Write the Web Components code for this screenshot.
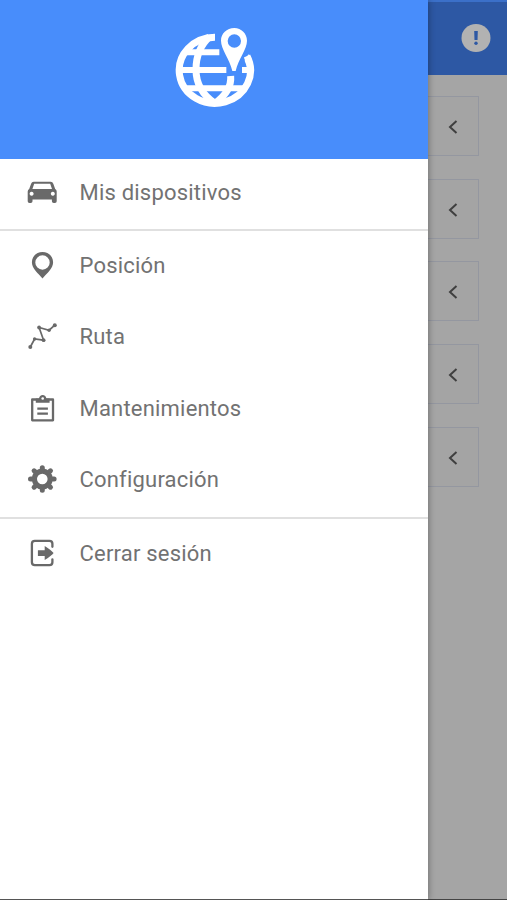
<!DOCTYPE html>
<html lang="es">
<head>
<meta charset="utf-8">
<title>Menú</title>
<style>
html,body{margin:0;height:100%;overflow:hidden}
body{font-family:Roboto,"Liberation Sans",sans-serif;background:#a5a5a5}
</style>
</head>
<body>
<app-shell>
  <side-drawer slot="drawer">
    <brand-header></brand-header>
    <menu-item icon="car">Mis dispositivos</menu-item>
    <menu-divider></menu-divider>
    <menu-item icon="pin">Posición</menu-item>
    <menu-item icon="route">Ruta</menu-item>
    <menu-item icon="clipboard">Mantenimientos</menu-item>
    <menu-item icon="gear">Configuración</menu-item>
    <menu-divider></menu-divider>
    <menu-item icon="exit">Cerrar sesión</menu-item>
  </side-drawer>
  <device-page></device-page>
</app-shell>
<script>
const define = (name, html, init) => customElements.define(name, class extends HTMLElement {
  constructor() {
    super();
    this.attachShadow({ mode: 'open' }).innerHTML = html;
  }
  connectedCallback() { if (init) init(this); }
});

const icons = {
  car: '<path fill-rule="evenodd" d="M20.700 16.300h17q2 0 2.600 1.900l1.900 5.300q1.500.7 1.500 2.500v9.800q0 1.800-1.800 1.800h-1.200q-1.800 0-1.800-1.800v-1.900H19.500v1.900q0 1.800-1.800 1.800h-1.200q-1.800 0-1.800-1.800V26q0-1.800 1.500-2.500l1.900-5.300q.6-1.900 2.600-1.900zm.5 1.900-1.800 5.400h19.600l-1.800-5.400zM18.600 26.200a2 2 0 1 0 .01 0zm21.200 0a2 2 0 1 0 .01 0z" transform="translate(0 -.5)"/>',
  pin: '<path transform="translate(0 -1)" fill-rule="evenodd" d="M29.500 14c-6 0-10.600 4.600-10.600 10.200C18.900 30.500 25 35 29.500 40.500C34 35 40.100 30.500 40.100 24.200C40.100 18.600 35.500 14 29.500 14zm0 3.300a7.200 7.200 0 1 1 0 14.400a7.200 7.200 0 0 1 0-14.400z"/>',
  route: '<g transform="translate(0 -2.500)"><path fill="none" stroke="currentColor" stroke-width="1.700" d="m17.300 39.500 4.300-8 9 1.200-4.500-12.700 10 2.700 5.700-5"/><circle cx="17.300" cy="39.500" r="2"/><circle cx="21.600" cy="31.500" r="1.700"/><circle cx="30.600" cy="32.700" r="1.900"/><circle cx="26.100" cy="20" r="1.900"/><circle cx="36.100" cy="22.700" r="1.700"/><circle cx="41.800" cy="17.700" r="2"/></g>',
  clipboard: '<g transform="translate(-.2 -1)"><path fill="none" stroke="currentColor" stroke-width="2.300" stroke-linejoin="round" d="M19.400 18.500h20.800v20.800H19.400z"/><path d="M23 17.500h3.200c.3-2.300 1.800-3.500 3.700-3.500s3.400 1.200 3.700 3.500h3.200v4.300H23z"/><circle cx="29.900" cy="17.500" r="1.300" fill="#fff"/><path d="M24.500 26.600h10.600v2.200H24.500zm0 5h10.600v2.200H24.500z"/></g>',
  gear: '<g transform="translate(-.2 -2.500)"><circle cx="29.500" cy="28.500" r="7.900" fill="none" stroke="currentColor" stroke-width="5.200"/><g stroke="currentColor" stroke-width="5" stroke-linecap="round"><path d="M29.500 17.200v2M29.500 37.800v2M17.700 28.500h2M39.300 28.500h2M21.300 20.300l1.300 1.300M36.400 35.400l1.300 1.300M37.700 20.300l-1.300 1.300M22.600 35.400l-1.300 1.300"/></g></g>',
  exit: '<g transform="translate(0 -1.700)"><path fill="none" stroke="currentColor" stroke-width="2.300" stroke-linecap="round" d="M39.400 21.500v-3q0-2.900-2.900-2.900h-14.700q-2.900 0-2.900 2.900v18.500q0 2.900 2.900 2.900h14.700q2.900 0 2.900-2.900v-3"/><path d="M24.900 25h6.800v-4.200q7 4.500 8.900 7-1.900 2.500-8.900 7v-4.200h-6.800z"/></g>'
};

define('app-shell', `<style>
:host{display:flex;height:100%;width:100%}
main{flex:1;min-width:0;display:flex}
slot[name=drawer]::slotted(*){flex:none}
</style><slot name="drawer"></slot><main><slot></slot></main>`);

define('side-drawer', `<style>
:host{display:flex;flex-direction:column;width:428.400px;background:#fff;z-index:1;box-shadow:0 0 7px rgba(0,0,0,.38);border-bottom:1px solid #555;box-sizing:border-box}
</style><slot></slot>`);

define('brand-header', `<style>
:host{display:flex;justify-content:center;height:158.500px;background:#488dfb;box-sizing:border-box;padding:20px 0 0 1px}
svg{width:100px;height:95px;display:block}
</style>
<svg viewBox="0 0 300 285">
 <g fill="none" stroke="#fff" stroke-width="18">
  <path stroke-width="21" d="M150 52A107 99 0 1 0 246 108" />
  <path d="M66 97H163M40 150H184M231 150H258M56 205H243" />
  <path stroke-width="21" d="M134 50Q93 87 93 149T150 250M197 168Q201 212 150 250" />
 </g>
 <path fill="#fff" fill-rule="evenodd" d="M208 24c-23 0-40 17-40 38 0 26 26 55 34 91h10c8-36 34-65 34-91 0-21-17-38-38-38zm0 19a20 20 0 1 1 0 40 20 20 0 0 1 0-40z"/>
 <path fill="#fff" d="M251 102 239 122 247 144 258 144z"/>
</svg>`);

define('menu-divider', `<style>
:host{display:block;height:2px;background:#e0e0e0}
</style>`);

define('menu-item', `<style>
:host{display:flex;align-items:center;height:71.400px;padding-left:13px;color:#727272;font-size:22px;letter-spacing:.2px;line-height:26px}
:host([icon=car]){height:70.800px}
:host([icon=car]) span{padding-bottom:1px}
svg{width:60px;height:56px;margin-right:6.500px;color:#696969;fill:currentColor;flex:none}
span{padding-bottom:2px}
</style><svg viewBox="0 0 60 56"></svg><span><slot></slot></span>`,
  el => { el.shadowRoot.querySelector('svg').innerHTML = icons[el.getAttribute('icon')]; });

define('device-page', `<style>
:host{display:flex;flex-direction:column;flex:1;min-width:0;background:#a5a5a5;border-bottom:1px solid #444;box-sizing:border-box}
header{height:75px;background:#2d58a4;border-top:2px solid #3b70c9;box-sizing:border-box;display:flex;justify-content:flex-end;align-items:center;padding:0 16px 2px 0}
header svg{width:30px;height:30px}
section{display:flex;flex-direction:column;gap:22.600px;padding:21.300px 28.500px 0 0}
</style>
<header><svg viewBox="0 0 30 30"><ellipse cx="15" cy="15" rx="14.500" ry="14" fill="#b2b2b2"/><path d="M13.200 8h3.600l-.3 9h-3z" fill="#2d58a4"/><circle cx="15" cy="20.300" r="1.700" fill="#2d58a4"/></svg></header>
<section><device-card></device-card><device-card></device-card><device-card></device-card><device-card></device-card><device-card></device-card></section>`);

define('device-card', `<style>
:host{display:flex;align-items:center;justify-content:center;height:60px;box-sizing:border-box;border:1px solid #9497a0;border-left:0;background:#a4a4a4}
svg{width:12px;height:16px;margin-top:2px}
</style><svg viewBox="0 0 12 16"><path d="M9.500 2 3 8l6.500 6" fill="none" stroke="#3f3f3f" stroke-width="2"/></svg>`);
</script>
</body>
</html>
